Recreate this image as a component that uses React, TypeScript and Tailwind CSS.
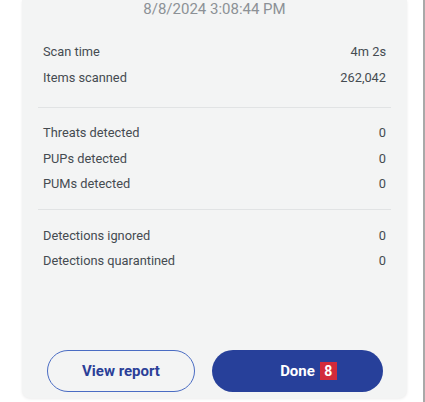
import React from 'react';

interface Stat {
  label: string;
  value: string;
}

const sections: Stat[][] = [
  [
    { label: 'Scan time', value: '4m 2s' },
    { label: 'Items scanned', value: '262,042' },
  ],
  [
    { label: 'Threats detected', value: '0' },
    { label: 'PUPs detected', value: '0' },
    { label: 'PUMs detected', value: '0' },
  ],
  [
    { label: 'Detections ignored', value: '0' },
    { label: 'Detections quarantined', value: '0' },
  ],
];

const StatRow: React.FC<{ stat: Stat }> = ({ stat }) => (
  <div className="flex items-center justify-between h-[25.5px] px-[21px] text-[12.8px] text-[#454b51]">
    <span>{stat.label}</span>
    <span>{stat.value}</span>
  </div>
);

const App: React.FC = () => {
  return (
    <div
      className="w-[425px] h-[402px] bg-white border-r-2 border-[#a9a9a9] overflow-hidden"
      style={{ fontFamily: 'Roboto, "Liberation Sans", sans-serif' }}
    >
      <div className="ml-[22px] w-[385px] h-[398px] bg-[#f3f4f4] rounded-b-[8px] shadow-[0_1px_3px_rgba(0,0,0,0.08)] flex flex-col">
        {/* Scan date */}
        <div className="text-center text-[15px] leading-[18px] text-[#8c9196]">
          8/8/2024 3:08:44 PM
        </div>

        {/* Stats */}
        <div className="mt-[21px]">
          {sections.map((rows, i) => (
            <div key={i}>
              {i > 0 && <div className={`mx-[16px] h-px bg-[#e1e3e4] ${i === 1 ? 'mt-[17px] mb-[12px]' : 'mt-[12px] mb-[13px]'}`}></div>}
              {rows.map(stat => (
                <StatRow key={stat.label} stat={stat} />
              ))}
            </div>
          ))}
        </div>

        {/* Actions */}
        <div className="mt-auto mb-[6px] flex items-center gap-[17px] pl-[25px] pr-[24px]">
          <button className="w-[148px] h-[42px] rounded-full border-[1.5px] border-[#4a6cc3] text-[#2b3f98] text-[15px] font-bold">
            View report
          </button>
          <button className="flex-1 h-[42px] rounded-full bg-[#27409a] text-white text-[15px] font-bold flex items-center justify-center">
            <span className="relative">
              Done
              <span className="absolute left-full top-1/2 -translate-y-1/2 ml-[5px] w-[17px] h-[18px] bg-[#d22b3b] text-white text-[14px] leading-[18px] font-bold text-center">8</span>
            </span>
          </button>
        </div>
      </div>
    </div>
  );
};

export default App;
